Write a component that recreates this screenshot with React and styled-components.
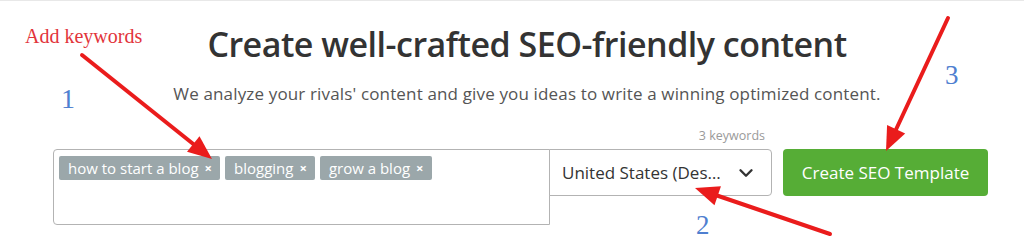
import styled, { createGlobalStyle } from "styled-components";
import { ChevronDown } from "lucide-react";

const GlobalStyle = createGlobalStyle`
  html, body {
    margin: 0;
    padding: 0;
    background: #ffffff;
  }
  body {
    font-family: "Open Sans", "Noto Sans", Arial, sans-serif;
    color: #333333;
  }
`;

const Page = styled.div`
  position: relative;
  width: 1024px;
  height: 252px;
  box-sizing: border-box;
  border-top: 1px solid #e8e8e8;
  overflow: hidden;
`;

const Hero = styled.div`
  display: flex;
  flex-direction: column;
  align-items: center;
  padding: 21px 0 0 30px;
`;

const Title = styled.h1`
  margin: 0;
  font-size: 34px;
  line-height: 44px;
  font-weight: 600;
  color: #333333;
  letter-spacing: -0.5px;
`;

const Subtitle = styled.p`
  margin: 16px 0 0;
  font-size: 17px;
  line-height: 24px;
  color: #555555;
  letter-spacing: 0.15px;
`;

const Form = styled.div`
  align-self: flex-start;
  margin: 22px 0 0 23px;
  display: flex;
  flex-direction: column;
`;

const Counter = styled.div`
  width: 718px;
  box-sizing: border-box;
  padding-right: 6px;
  text-align: right;
  font-size: 12.5px;
  line-height: 16px;
  color: #9a9a9a;
  margin-bottom: 5px;
`;

const Controls = styled.div`
  display: flex;
  align-items: flex-start;
`;

const KeywordBox = styled.div`
  width: 497px;
  height: 76px;
  box-sizing: border-box;
  border: 1px solid #b3b3b3;
  border-radius: 4px 0 0 4px;
  padding: 6px 5px;
  display: flex;
  flex-wrap: wrap;
  align-content: flex-start;
  gap: 5px;
`;

const Chip = styled.span`
  display: inline-flex;
  align-items: center;
  gap: 6px;
  height: 24px;
  padding: 0 8px 0 9px;
  border-radius: 2px;
  background: #9ba7aa;
  color: #ffffff;
  font-size: 15px;
`;

const Remove = styled.span`
  font-size: 13px;
  font-weight: 700;
`;

const Select = styled.div`
  width: 223px;
  height: 47px;
  margin-left: -1px;
  box-sizing: border-box;
  border: 1px solid #b3b3b3;
  border-radius: 0 4px 4px 0;
  background: #ffffff;
  display: flex;
  align-items: center;
  justify-content: space-between;
  padding: 0 14px 0 12px;
  color: #333333;
`;

const SelectLabel = styled.span`
  width: 166px;
  font-size: 17px;
  white-space: nowrap;
  overflow: hidden;
  text-overflow: ellipsis;
`;

const Button = styled.button`
  margin-left: 11px;
  width: 205px;
  height: 47px;
  border: 0;
  border-radius: 4px;
  background: #56ad36;
  color: #ffffff;
  font-family: inherit;
  font-size: 17px;
  cursor: pointer;
`;

const Overlay = styled.svg`
  position: absolute;
  inset: 0;
  pointer-events: none;
`;

const Note = styled.span`
  position: absolute;
  left: ${(p) => p.$x}px;
  top: ${(p) => p.$y}px;
  font-family: "Liberation Serif", "Times New Roman", serif;
  line-height: 1;
  font-size: ${(p) => p.$size}px;
  color: ${(p) => p.$color};
  white-space: nowrap;
`;

function Arrow({ from, to, head = 24, half = 10 }) {
  const dx = to[0] - from[0];
  const dy = to[1] - from[1];
  const len = Math.hypot(dx, dy);
  const ux = dx / len;
  const uy = dy / len;
  const bx = to[0] - ux * head;
  const by = to[1] - uy * head;
  const px = -uy * half;
  const py = ux * half;
  return (
    <g fill="#ea1c1c" stroke="#ea1c1c">
      <line x1={from[0]} y1={from[1]} x2={bx} y2={by} strokeWidth="4" strokeLinecap="round" />
      <polygon points={`${to[0]},${to[1]} ${bx + px},${by + py} ${bx - px},${by - py}`} stroke="none" />
    </g>
  );
}

const keywords = ["how to start a blog", "blogging", "grow a blog"];

export default function App() {
  return (
    <Page>
      <GlobalStyle />
      <Hero>
        <Title>Create well-crafted SEO-friendly content</Title>
        <Subtitle>
          We analyze your rivals' content and give you ideas to write a winning optimized content.
        </Subtitle>
        <Form>
          <Counter>{keywords.length} keywords</Counter>
          <Controls>
            <KeywordBox>
              {keywords.map((k) => (
                <Chip key={k}>
                  {k}
                  <Remove>×</Remove>
                </Chip>
              ))}
            </KeywordBox>
            <Select>
              <SelectLabel>United States (Desktop)</SelectLabel>
              <ChevronDown size={22} strokeWidth={2.6} color="#333" />
            </Select>
            <Button type="button">Create SEO Template</Button>
          </Controls>
        </Form>
      </Hero>

      <Overlay width="1024" height="252" viewBox="0 0 1024 252">
        <Arrow from={[82, 54]} to={[212, 158]} />
        <Arrow from={[948, 17]} to={[886, 150]} />
        <Arrow from={[830, 233]} to={[695, 187]} />
      </Overlay>

      <Note $x={25} $y={25} $size={20} $color="#e2343b">Add keywords</Note>
      <Note $x={61} $y={84} $size={28} $color="#4f7fd0">1</Note>
      <Note $x={945} $y={61} $size={27} $color="#4f7fd0">3</Note>
      <Note $x={696} $y={211} $size={27} $color="#4f7fd0">2</Note>
    </Page>
  );
}
